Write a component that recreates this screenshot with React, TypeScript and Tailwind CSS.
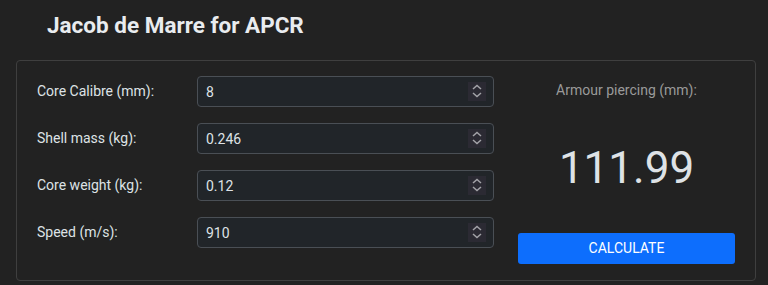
import React, { useState } from 'react';

interface FieldDef {
  key: string;
  label: string;
}

const fields: FieldDef[] = [
  { key: 'calibre', label: 'Core Calibre (mm):' },
  { key: 'mass', label: 'Shell mass (kg):' },
  { key: 'core', label: 'Core weight (kg):' },
  { key: 'speed', label: 'Speed (m/s):' },
];

const Spinner: React.FC = () => (
  <span className="pointer-events-none absolute right-[8px] top-[6px] flex h-[19px] w-[18px] items-center justify-center bg-[#2b2a33]">
    <svg width="18" height="19" viewBox="0 0 18 19" fill="none" stroke="#a3a3a8" strokeWidth="1.5">
      <polyline points="5,7 9,3.5 13,7" />
      <polyline points="5,11 9,14.5 13,11" />
    </svg>
  </span>
);

export default function App() {
  const [values, setValues] = useState<Record<string, string>>({
    calibre: '8',
    mass: '0.246',
    core: '0.12',
    speed: '910',
  });
  const [result] = useState('111.99');

  return (
    <div className="min-h-screen bg-[#222222] font-['Roboto','Liberation_Sans',sans-serif] text-[#dee2e6]">
      <h1 className="pl-[47px] pt-[12px] text-[22.5px] font-bold leading-[26px] text-[#e9ecef]">
        Jacob de Marre for APCR
      </h1>

      <div className="ml-[16px] mt-[22px] flex h-[221px] w-[740px] rounded-[4px] border border-[#3f3f3f]">
        <div className="flex flex-col gap-[16px] pl-[20px] pt-[15px]">
          {fields.map((f) => (
            <div key={f.key} className="flex items-center">
              <label className="w-[160px] text-[14px] text-[#dee2e6]">{f.label}</label>
              <div className="relative">
                <input
                  type="text"
                  value={values[f.key]}
                  onChange={(e) => setValues({ ...values, [f.key]: e.target.value })}
                  className="h-[31px] w-[297px] rounded-[4px] border border-[#4a4f55] bg-[#212529] pl-[8px] text-[14px] text-[#dee2e6] outline-none"
                />
                <Spinner />
              </div>
            </div>
          ))}
        </div>

        <div className="ml-[24px] flex w-[217px] flex-col items-center">
          <p className="mt-[19px] text-[14px] leading-[20px] text-[#9a9a9a]">Armour piercing (mm):</p>
          <p className="mt-[46px] text-[44px] leading-[44px] text-[#dee2e6]">{result}</p>
          <button
            type="button"
            className="mt-[43px] h-[31px] w-[217px] rounded-[3px] bg-[#0d6efd] text-[14px] text-white"
          >
            CALCULATE
          </button>
        </div>
      </div>
    </div>
  );
}
